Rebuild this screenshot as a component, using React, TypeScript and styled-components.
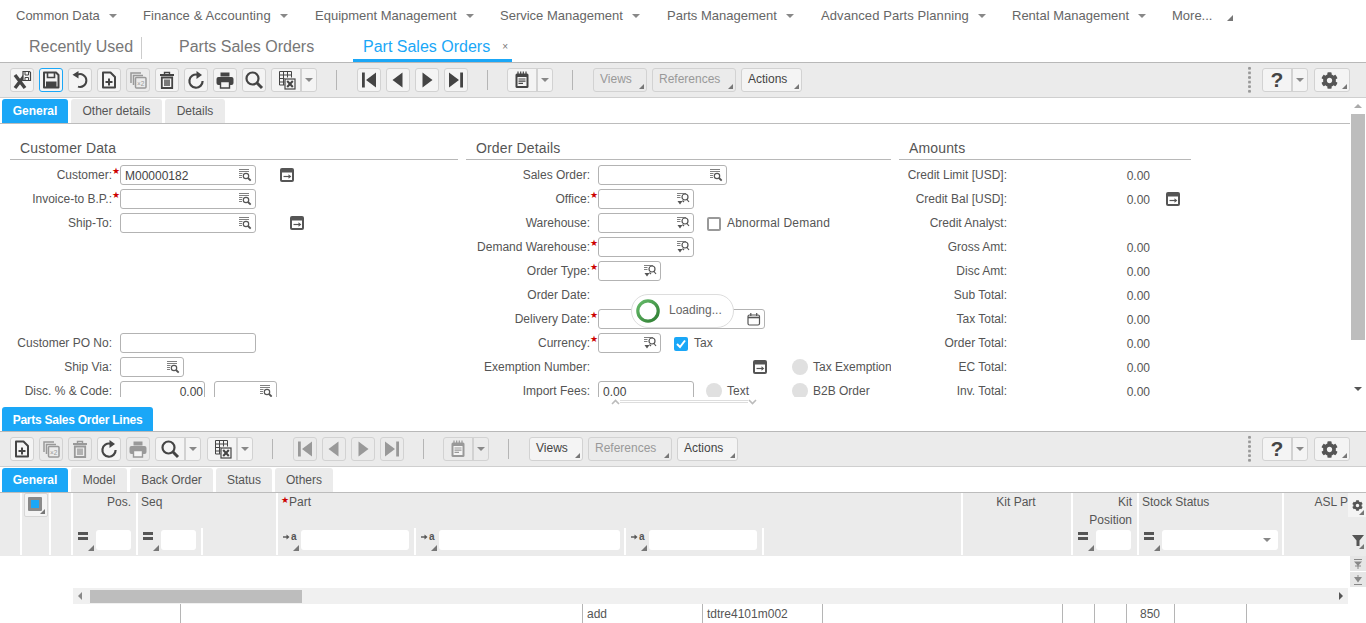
import React from 'react';
import styled, { createGlobalStyle } from 'styled-components';
import { FaCog } from 'react-icons/fa';

const blue = '#1aa7f7';

const GlobalStyle = createGlobalStyle`
  html, body { margin: 0; padding: 0; background: #fff; }
  body { font-family: "Liberation Sans", Arial, sans-serif; color: #555; font-size: 12px; }
  * { box-sizing: border-box; }
`;

const Page = styled.div`
  position: relative;
  width: 1366px;
  height: 623px;
  overflow: hidden;
`;

/* top menu */
const MenuBar = styled.div`
  display: flex;
  align-items: center;
  height: 31px;
  padding-left: 16px;
  font-size: 13px;
  color: #666;
`;
const MenuItem = styled.div<{ $w: number; $ls?: number }>`
  display: flex;
  align-items: center;
  width: ${({ $w }) => $w}px;
  white-space: nowrap;
  letter-spacing: ${({ $ls }) => $ls ?? 0}px;
`;
const Caret = styled.span`
  display: inline-block;
  margin-left: 9px;
  border-left: 4px solid transparent;
  border-right: 4px solid transparent;
  border-top: 4px solid #888;
`;
const MoreCorner = styled.span`
  display: inline-block;
  margin: 5px 0 0 15px;
  border-left: 6px solid transparent;
  border-bottom: 6px solid #777;
`;

const TabRow = styled.div`
  display: flex;
  height: 32px;
  padding-left: 19px;
  font-size: 16px;
  color: #777;
  border-bottom: 1px solid #b8b8b8;
`;
const PageTab = styled.div<{ $active?: boolean; $w: number; $pl?: number }>`
  display: flex;
  align-items: center;
  width: ${({ $w }) => $w}px;
  height: 31px;
  padding-left: ${({ $pl }) => $pl ?? 10}px;
  padding-top: ${({ $active }) => ($active ? 3 : 0)}px;
  white-space: nowrap;
  color: ${({ $active }) => ($active ? blue : '#777')};
  border-bottom: ${({ $active }) => ($active ? `3px solid ${blue}` : 'none')};
`;
const RecentLabel = styled(PageTab)`
  position: relative;
  &::after {
    content: '';
    position: absolute;
    right: 9px;
    top: 6px;
    height: 22px;
    width: 1px;
    background: #ccc;
  }
`;
const CloseMark = styled.span`
  margin: 0 0 0 12px;
  font-size: 10px;
  color: #777;
`;

/* toolbars */
const Toolbar = styled.div<{ $borderTop?: boolean }>`
  display: flex;
  align-items: center;
  gap: 5px;
  height: ${({ $borderTop }) => ($borderTop ? 36 : 35)}px;
  padding: 0 16px 0 10px;
  background: #ebebeb;
  border-bottom: 1px solid #cfcfcf;
  border-top: ${({ $borderTop }) => ($borderTop ? '1px solid #b8b8b8' : 'none')};
`;
const Btn = styled.div<{ $off?: boolean; $focus?: boolean }>`
  display: flex;
  align-items: center;
  justify-content: center;
  width: 24px;
  height: 24px;
  border-radius: 3px;
  background: ${({ $off }) => ($off ? '#ebebeb' : '#f4f4f4')};
  border: 1px solid ${({ $focus }) => ($focus ? blue : '#d2d2d2')};
  color: ${({ $off }) => ($off ? '#999' : '#444')};
`;
const Split = styled.div<{ $off?: boolean }>`
  display: flex;
  height: 24px;
  border-radius: 3px;
  border: 1px solid #d2d2d2;
  color: ${({ $off }) => ($off ? '#999' : '#444')};
  background: ${({ $off }) => ($off ? '#ebebeb' : '#f4f4f4')};
  & + & {
    margin-left: 1px;
  }
`;
const SplitMain = styled.div`
  display: flex;
  align-items: center;
  justify-content: center;
  width: 30px;
  border-right: 2px solid #d2d2d2;
`;
const SplitArrow = styled.div`
  display: flex;
  align-items: center;
  justify-content: center;
  width: 14px;
  &::after {
    content: '';
    border-left: 4px solid transparent;
    border-right: 4px solid transparent;
    border-top: 4px solid #888;
  }
`;
const Sep = styled.div<{ $tight?: boolean }>`
  width: 1px;
  height: 20px;
  margin: 0 ${({ $tight }) => ($tight ? 14 : 15)}px 0 14px;
  background: #b5b5b5;
`;
const MenuBtn = styled.div<{ $off?: boolean; $w: number }>`
  position: relative;
  display: flex;
  align-items: center;
  width: ${({ $w }) => $w}px;
  height: 24px;
  padding: 0 0 2px 6px;
  border-radius: 3px;
  background: ${({ $off }) => ($off ? '#ebebeb' : '#f4f4f4')};
  border: 1px solid #d2d2d2;
  color: ${({ $off }) => ($off ? '#999' : '#444')};
`;
const Corner = styled.span`
  position: absolute;
  right: 2px;
  bottom: 2px;
  border-left: 5px solid transparent;
  border-bottom: 5px solid #777;
`;
const Spacer = styled.div`
  flex: 1;
`;
const Dots = styled.div`
  width: 3px;
  height: 28px;
  margin-right: 6px;
  background-image: radial-gradient(circle, #999 1.3px, transparent 1.5px);
  background-size: 3px 4.6px;
`;
const HelpMark = styled.span`
  font-size: 21px;
  font-weight: bold;
  color: #444;
`;
const GearBtn = styled(MenuBtn)`
  justify-content: flex-start;
  margin-left: 1px;
  padding: 0 0 0 6px;
  color: #555;
`;

/* sub tabs */
const SubTabs = styled.div`
  display: flex;
  gap: 3px;
  height: 25px;
  margin-top: 1px;
  padding-left: 2px;
  border-bottom: 1px solid #bcbcbc;
`;
const SubTab = styled.div<{ $active?: boolean; $w: number }>`
  display: flex;
  align-items: center;
  justify-content: center;
  width: ${({ $w }) => $w}px;
  height: 24px;
  border-radius: 3px 3px 0 0;
  background: ${({ $active }) => ($active ? blue : '#ebebeb')};
  color: ${({ $active }) => ($active ? '#fff' : '#555')};
  font-weight: ${({ $active }) => ($active ? 'bold' : 'normal')};
`;

/* form */
const FormArea = styled.div`
  display: flex;
  height: 299px;
`;
const FormMain = styled.div`
  width: 1350px;
  overflow: hidden;
`;
const Columns = styled.div`
  display: flex;
  gap: 8px;
  padding-left: 10px;
`;
const Section = styled.section<{ $w: number }>`
  width: ${({ $w }) => $w}px;
  overflow: hidden;
  flex: none;
`;
const SectionTitle = styled.div`
  display: flex;
  align-items: flex-end;
  height: 36px;
  padding: 0 0 3px 10px;
  font-size: 14px;
  letter-spacing: 0.15px;
  color: #555;
  border-bottom: 1px solid #b8b8b8;
  margin-bottom: 3px;
`;
const Row = styled.div`
  display: flex;
  align-items: center;
  height: 24px;
  white-space: nowrap;
`;
const Label = styled.div<{ $w: number }>`
  width: ${({ $w }) => $w}px;
  padding-bottom: 1px;
  text-align: right;
  flex: none;
`;
const Star = styled.span`
  display: block;
  flex: none;
  width: 8px;
  height: 20px;
  font-size: 9px;
  line-height: 12px;
  color: #c00;
`;
const Field = styled.div<{ $w: number; $ml?: number; $right?: boolean }>`
  position: relative;
  display: flex;
  align-items: center;
  justify-content: ${({ $right }) => ($right ? 'flex-end' : 'flex-start')};
  flex: none;
  width: ${({ $w }) => $w}px;
  height: 20px;
  margin-left: ${({ $ml }) => $ml ?? 0}px;
  padding: 1px ${({ $right }) => ($right ? 1 : 0)}px 0 4px;
  border: 1px solid #b3b3b3;
  border-radius: 3px;
  background: #fff;
  color: #444;
`;
const FieldIcon = styled.span`
  position: absolute;
  right: 3px;
  top: 2px;
  display: flex;
  color: #555;
`;
const LinkBtn = styled.span<{ $ml: number }>`
  display: flex;
  flex: none;
  margin-left: ${({ $ml }) => $ml}px;
`;
const CheckBox = styled.span<{ $on?: boolean; $ml: number }>`
  display: flex;
  flex: none;
  align-items: center;
  justify-content: center;
  width: 14px;
  height: 14px;
  margin: 1px 6px 0 ${({ $ml }) => $ml}px;
  border-radius: 2px;
  border: ${({ $on }) => ($on ? 'none' : '2px solid #999')};
  background: ${({ $on }) => ($on ? blue : '#fff')};
`;
const CheckText = styled.span<{ $ls?: number }>`
  letter-spacing: ${({ $ls }) => $ls ?? 0}px;
`;
const Toggle = styled.span<{ $ml: number }>`
  flex: none;
  width: 16px;
  height: 16px;
  margin: 0 5px 0 ${({ $ml }) => $ml}px;
  border-radius: 50%;
  background: #e0e0e0;
`;
const AmountValue = styled.div`
  flex: none;
  width: 143px;
  padding-top: 1px;
  text-align: right;
  color: #555;
`;
const AmountLabel = styled(Label)`
  color: #555;
`;

const VScroll = styled.div`
  position: relative;
  display: flex;
  flex-direction: column;
  align-items: center;
  justify-content: space-between;
  width: 16px;
  padding: 6px 0 6px;
  background: #fff;
`;
const ScrollUp = styled.span`
  border-left: 4px solid transparent;
  border-right: 4px solid transparent;
  border-bottom: 4px solid #aaa;
`;
const ScrollDown = styled.span`
  border-left: 4px solid transparent;
  border-right: 4px solid transparent;
  border-top: 4px solid #555;
`;
const ScrollThumb = styled.div`
  position: absolute;
  left: 1px;
  top: 16px;
  width: 14px;
  height: 226px;
  background: #bdbdbd;
`;

const Splitter = styled.div`
  display: flex;
  align-items: flex-start;
  height: 10px;
  padding: 2px 0 0 611px;
  color: #bbb;
`;
const SplitterLine = styled.div`
  width: 128px;
  height: 3px;
  margin-top: 1px;
  border-top: 1px solid #ddd;
  border-bottom: 1px solid #ddd;
`;

/* lines tab */
const LinesTab = styled.div`
  display: flex;
  align-items: center;
  justify-content: center;
  width: 151px;
  height: 24px;
  margin-left: 2px;
  padding-top: 1px;
  border-radius: 3px 3px 0 0;
  background: ${blue};
  color: #fff;
  font-weight: bold;
  letter-spacing: -0.25px;
`;

/* grid */
const GridHead = styled.div`
  display: flex;
  height: 63px;
  background: #ebebeb;
`;
const HeadCell = styled.div<{ $w: number; $align?: string; $last?: boolean }>`
  display: flex;
  flex-direction: column;
  flex: none;
  width: ${({ $w }) => $w}px;
  height: 62px;
  border-right: ${({ $last }) => ($last ? 'none' : '2px solid #fff')};
  text-align: ${({ $align }) => $align ?? 'left'};
  overflow: hidden;
`;
const HeadTitle = styled.div<{ $flush?: boolean }>`
  height: 35px;
  padding: 0 ${({ $flush }) => ($flush ? 0 : 5)}px 0 ${({ $flush }) => ($flush ? 0 : 3)}px;
  line-height: 18px;
  color: #555;
  white-space: nowrap;
`;
const HeadStar = styled.span`
  font-size: 9px;
  line-height: 0;
  color: #c00;
  vertical-align: 3px;
`;
const HeadFilters = styled.div`
  display: flex;
  height: 27px;
  margin-top: auto;
`;
const SubCell = styled.div<{ $w: number; $noLine?: boolean }>`
  position: relative;
  display: flex;
  align-items: center;
  flex: none;
  width: ${({ $w }) => $w}px;
  padding: 0 0 4px 4px;
  border-right: ${({ $noLine }) => ($noLine ? 'none' : '2px solid #fff')};
`;
const FilterOp = styled.span`
  position: relative;
  display: flex;
  flex: none;
  align-items: flex-start;
  width: 19px;
  height: 23px;
  padding-top: 4px;
  color: #555;
`;
const OpCorner = styled.span`
  position: absolute;
  right: 2px;
  bottom: 0;
  border-left: 6px solid transparent;
  border-bottom: 6px solid #777;
`;
const OpText = styled.span`
  display: flex;
  align-items: center;
  font-size: 10px;
  line-height: 10px;
  font-weight: bold;
  color: #555;
`;
const CellInput = styled.div<{ $w: number }>`
  position: relative;
  flex: none;
  width: ${({ $w }) => $w}px;
  height: 20px;
  border-radius: 3px;
  background: #fff;
`;
const SelectArrow = styled.span`
  position: absolute;
  right: 7px;
  top: 8px;
  border-left: 4px solid transparent;
  border-right: 4px solid transparent;
  border-top: 4px solid #888;
`;
const SelectAll = styled.div`
  position: relative;
  display: flex;
  align-items: center;
  justify-content: center;
  width: 24px;
  height: 24px;
  margin-left: 2px;
  background: #f4f4f4;
  border: 1px solid #d6d6d6;
  border-radius: 2px;
`;
const SelectMark = styled.span`
  display: block;
  width: 14px;
  height: 14px;
  margin: 0 3px 2px 0;
  background: ${blue};
  border: 3px solid #8a8a8a;
  border-radius: 1px;
`;
const HeadRail = styled.div`
  display: flex;
  flex-direction: column;
  align-items: flex-end;
  justify-content: space-between;
  flex: none;
  width: 18px;
  height: 62px;
  padding-bottom: 4px;
`;
const RailButton = styled.div`
  position: relative;
  display: flex;
  align-items: center;
  justify-content: center;
  width: 18px;
  height: 24px;
  background: #f4f4f4;
  color: #555;
`;
const RailFilter = styled.div`
  position: relative;
  display: flex;
  justify-content: center;
  width: 17px;
  height: 18px;
  color: #555;
`;

const GridBody = styled.div`
  display: flex;
  justify-content: flex-end;
  height: 32px;
`;
const BodyButtons = styled.div`
  display: flex;
  flex-direction: column;
  width: 16px;
`;
const BodyBtn = styled.div`
  display: flex;
  align-items: center;
  justify-content: center;
  height: 16px;
  background: #e6e6e6;
  border-bottom: 1px solid #fff;
  color: #888;
`;
const HScrollRow = styled.div`
  display: flex;
  height: 16px;
  padding: 0 18px 0 73px;
`;
const HScroll = styled.div`
  position: relative;
  display: flex;
  flex: 1;
  align-items: center;
  justify-content: space-between;
  padding: 0 5px;
  background: #f0f0f0;
`;
const HThumb = styled.div`
  position: absolute;
  left: 17px;
  top: 2px;
  width: 212px;
  height: 13px;
  background: #bdbdbd;
`;
const ArrowLeft = styled.span`
  border-top: 4px solid transparent;
  border-bottom: 4px solid transparent;
  border-right: 4px solid #888;
`;
const ArrowRight = styled.span`
  border-top: 4px solid transparent;
  border-bottom: 4px solid transparent;
  border-left: 4px solid #555;
`;
const FootRow = styled.div`
  display: flex;
  height: 19px;
  padding-left: 180px;
`;
const FootCell = styled.div<{ $w: number; $pl: number }>`
  flex: none;
  width: ${({ $w }) => $w}px;
  height: 19px;
  padding: 2px 0 0 ${({ $pl }) => $pl}px;
  line-height: 16px;
  border-left: 1px solid #b5b5b5;
  color: #555;
`;

/* loading overlay */
const LoadingPill = styled.div`
  position: absolute;
  left: 631px;
  top: 294px;
  display: flex;
  align-items: center;
  width: 103px;
  height: 34px;
  padding: 0 0 1px 4px;
  gap: 9px;
  background: #fff;
  border: 1px solid #ddd;
  border-radius: 17px;
  color: #666;
`;
const LoadingText = styled.span`
  padding-bottom: 2px;
`;

/* icons */
type IconProps = { w?: number; h?: number; children: React.ReactNode };
const Svg = ({ w = 20, h = 20, children }: IconProps) => (
  <svg width={w} height={h} viewBox={`0 0 ${w} ${h}`} fill="none">{children}</svg>
);

const icons: Record<string, React.ReactNode> = {
  xsave: (
    <Svg>
      <path d="M3 5l10 13M13 5L3 18" stroke="currentColor" strokeWidth="3.4" />
      <path d="M11 1.5h6.5l1 1v8H11z" fill="#f4f4f4" stroke="currentColor" strokeWidth="1.2" />
      <path d="M13 2v3h3.5V2M13 10.5V7.5h3.5v3" stroke="currentColor" />
    </Svg>
  ),
  save: (
    <Svg>
      <path d="M3 2.5h12l2.5 2.5v12.5H3z" stroke="currentColor" strokeWidth="2" strokeLinejoin="round" />
      <path d="M6.5 3v4.5h7V3" stroke="currentColor" strokeWidth="1.6" />
      <path d="M5 11.5h10.5V17H5z" fill="currentColor" />
    </Svg>
  ),
  undo: (
    <Svg>
      <path d="M7.5 4.6A6.4 6.4 0 1 1 8 16.6" stroke="currentColor" strokeWidth="2" />
      <path d="M8.5 1v7.5L2.5 4.8z" fill="currentColor" />
    </Svg>
  ),
  add: (
    <Svg>
      <path d="M4 2.5h7.5l4.5 4.5v10.5H4z" stroke="currentColor" strokeWidth="2" strokeLinejoin="round" />
      <path d="M6.5 12h7M10 8.5v7" stroke="currentColor" strokeWidth="2" />
    </Svg>
  ),
  copy: (
    <Svg>
      <path d="M3 13V3h10" stroke="currentColor" strokeWidth="1.5" />
      <path d="M5.5 15V5.5H15" stroke="currentColor" strokeWidth="1.5" />
      <rect x="7.5" y="7.5" width="10.5" height="10.5" rx="1" stroke="currentColor" strokeWidth="1.5" />
      <text x="9" y="16" fontSize="6.5" fontFamily="Liberation Sans" fill="currentColor">×2</text>
    </Svg>
  ),
  trash: (
    <Svg>
      <path d="M3 5h14" stroke="currentColor" strokeWidth="2" />
      <path d="M7.5 4.5V2.5h5v2" stroke="currentColor" strokeWidth="1.4" />
      <path d="M4.8 7.5h10.4V18H4.8z" stroke="currentColor" strokeWidth="1.8" />
      <path d="M8 9.5v6.5M10 9.5v6.5M12 9.5v6.5" stroke="currentColor" strokeWidth="1.4" />
    </Svg>
  ),
  refresh: (
    <Svg>
      <path d="M11.5 4.7A6.6 6.6 0 1 0 16.6 11" stroke="currentColor" strokeWidth="2.2" />
      <path d="M10.5 1l5.5 4-5.5 4z" fill="currentColor" />
    </Svg>
  ),
  print: (
    <Svg>
      <path d="M5.5 2.5h9v4h-9z" fill="currentColor" />
      <rect x="1.5" y="7" width="17" height="8" rx="2" fill="currentColor" />
      <path d="M5.5 11.5h9v6.5h-9z" fill="#f4f4f4" stroke="currentColor" strokeWidth="1.4" />
    </Svg>
  ),
  search: (
    <Svg>
      <circle cx="8.5" cy="8.5" r="6" stroke="currentColor" strokeWidth="2.2" />
      <path d="M12.8 12.8l5.2 5.2" stroke="currentColor" strokeWidth="3" />
    </Svg>
  ),
  excel: (
    <Svg>
      <path d="M3.5 1.5h12v6M3.5 1.5V15h5M3.5 5h12M3.5 8.5h5M3.5 12h5M7.5 1.5v13.5M11.5 1.5v6" stroke="currentColor" strokeWidth="1" />
      <rect x="9" y="9" width="10" height="10" fill="#f4f4f4" stroke="currentColor" strokeWidth="1.2" />
      <path d="M11.2 11l5.6 6M16.8 11l-5.6 6" stroke="currentColor" strokeWidth="2" />
    </Svg>
  ),
  first: (
    <Svg>
      <path d="M3 2.5h2.8v15H3zM17 2.5v15L7 10z" fill="currentColor" />
    </Svg>
  ),
  prev: (
    <Svg>
      <path d="M14.5 2.5v15L4.5 10z" fill="currentColor" />
    </Svg>
  ),
  next: (
    <Svg>
      <path d="M5.5 2.5v15l10-7.5z" fill="currentColor" />
    </Svg>
  ),
  last: (
    <Svg>
      <path d="M17 2.5h-2.8v15H17zM3 2.5v15L13 10z" fill="currentColor" />
    </Svg>
  ),
  notes: (
    <Svg>
      <rect x="3.5" y="3.5" width="13" height="14.5" rx="1.5" fill="currentColor" />
      <path d="M6 1.5v3M8.7 1.5v3M11.3 1.5v3M14 1.5v3" stroke="currentColor" strokeWidth="1.2" />
      <path d="M5.5 7h9v9h-9z" fill="#f4f4f4" />
      <path d="M6.5 9h7M6.5 11.2h7M6.5 13.4h4.5" stroke="currentColor" strokeWidth="1.2" />
    </Svg>
  ),
};

const Lookup = () => (
  <Svg w={14} h={14}>
    <path d="M1 1.5h10M1 3.5h10M1 5.5h3.5M1 7.5h3M1 9.5h3" stroke="currentColor" strokeWidth="1" opacity=".75" />
    <circle cx="8" cy="8" r="2.7" stroke="currentColor" strokeWidth="1.2" />
    <path d="M10 10l2.7 2.7" stroke="currentColor" strokeWidth="1.8" />
  </Svg>
);
const LookupDown = () => (
  <Svg w={14} h={14}>
    <path d="M1 1.5h9M1 3.5h3.5M1 5.5h3.5" stroke="currentColor" strokeWidth="1" opacity=".75" />
    <circle cx="9" cy="5" r="3" stroke="currentColor" strokeWidth="1.2" />
    <path d="M11 7.5l2 2.5M6.5 8.5l1.5 1.5" stroke="currentColor" strokeWidth="1.2" />
    <path d="M1.5 9h5L4 12.5z" fill="currentColor" />
  </Svg>
);
const Calendar = () => (
  <Svg w={14} h={14}>
    <rect x="1" y="3" width="11.5" height="10" rx="1.5" stroke="currentColor" strokeWidth="1.2" />
    <path d="M1 5.5h11.5" stroke="currentColor" strokeWidth="1.6" />
    <path d="M3.8 1v3M9.7 1v3" stroke="currentColor" strokeWidth="1.2" />
  </Svg>
);
const LinkIcon = () => (
  <Svg w={14} h={14}>
    <rect width="14" height="14" rx="2" fill="#555" />
    <path d="M2 4.5h10V12H2z" fill="#fff" />
    <path d="M3.5 8.5h6" stroke="#555" strokeWidth="1.2" />
    <path d="M8.5 6.3l2.8 2.2-2.8 2.2z" fill="#555" />
  </Svg>
);
const Check = () => (
  <Svg w={12} h={12}>
    <path d="M2 6l3 3 5-6.5" stroke="#fff" strokeWidth="2" />
  </Svg>
);
const EqOp = () => (
  <Svg w={14} h={12}>
    <path d="M1 0h10v3H1zM1 5h10v3H1z" fill="currentColor" />
  </Svg>
);
const ArrowA = () => (
  <OpText>
    <Svg w={9} h={10}>
      <path d="M1 5h4" stroke="#555" strokeWidth="1.4" />
      <path d="M4.5 2.5l3 2.5-3 2.5z" fill="#555" />
    </Svg>
    a
  </OpText>
);
const Spinner = () => (
  <Svg w={24} h={24}>
    <defs>
      <linearGradient id="spin" x1="0" y1="0" x2="1" y2="1">
        <stop offset="0" stopColor="#66bb6a" />
        <stop offset="1" stopColor="#2e7d32" />
      </linearGradient>
    </defs>
    <circle cx="12" cy="12" r="10.2" stroke="url(#spin)" strokeWidth="3.2" />
  </Svg>
);
const ChevronUp = () => (
  <Svg w={9} h={6}>
    <path d="M1 5l3.5-3.5L8 5" stroke="currentColor" strokeWidth="1.6" />
  </Svg>
);
const ChevronDown = () => (
  <Svg w={9} h={6}>
    <path d="M1 1l3.5 3.5L8 1" stroke="currentColor" strokeWidth="1.6" />
  </Svg>
);

const menu: [string, number, number?][] = [
  ['Common Data', 127],
  ['Finance & Accounting', 172, 0.1],
  ['Equipment Management', 185],
  ['Service Management', 167],
  ['Parts Management', 154],
  ['Advanced Parts Planning', 191, 0.08],
  ['Rental Management', 160],
];

const IconBtn = ({ name, off, focus }: { name: string; off?: boolean; focus?: boolean }) => (
  <Btn $off={off} $focus={focus}>{icons[name]}</Btn>
);
const SplitBtn = ({ name, off }: { name: string; off?: boolean }) => (
  <Split $off={off}>
    <SplitMain>{icons[name]}</SplitMain>
    <SplitArrow />
  </Split>
);
const ViewBtn = ({ text, w, off }: { text: string; w: number; off?: boolean }) => (
  <MenuBtn $w={w} $off={off}>
    {text}
    <Corner />
  </MenuBtn>
);
const ToolRight = () => (
  <>
    <Spacer />
    <Dots />
    <Split>
      <SplitMain><HelpMark>?</HelpMark></SplitMain>
      <SplitArrow />
    </Split>
    <GearBtn $w={36}>
      <FaCog size={17} />
      <Corner />
    </GearBtn>
  </>
);

const FieldBox = ({ w, value, icon = 'lookup' }: { w: number; value?: string; icon?: 'lookup' | 'down' | 'cal' | 'none' }) => (
  <Field $w={w}>
    {value}
    {icon !== 'none' && (
      <FieldIcon>
        {icon === 'lookup' && <Lookup />}
        {icon === 'down' && <LookupDown />}
        {icon === 'cal' && <Calendar />}
      </FieldIcon>
    )}
  </Field>
);

const Lab = ({ w, text, req }: { w: number; text: string; req?: boolean }) => (
  <>
    <Label $w={w}>{text}</Label>
    <Star>{req ? '★' : ''}</Star>
  </>
);

const amounts: [string, string][] = [
  ['Credit Limit [USD]:', '0.00'],
  ['Credit Bal [USD]:', '0.00'],
  ['Credit Analyst:', ''],
  ['Gross Amt:', '0.00'],
  ['Disc Amt:', '0.00'],
  ['Sub Total:', '0.00'],
  ['Tax Total:', '0.00'],
  ['Order Total:', '0.00'],
  ['EC Total:', '0.00'],
  ['Inv. Total:', '0.00'],
];

const Op = ({ text }: { text?: boolean }) => (
  <FilterOp>
    {text ? <ArrowA /> : <EqOp />}
    <OpCorner />
  </FilterOp>
);

const footCells: [number, string, number][] = [
  [402, '', 4],
  [120, 'add', 4],
  [120, 'tdtre4101m002', 4],
  [240, '', 4],
  [32, '', 4],
  [32, '', 4],
  [48, '850', 13],
  [72, '', 4],
  [1, '', 0],
];

const App = () => (
  <Page>
    <GlobalStyle />
    <MenuBar>
      {menu.map(([text, w, ls]) => (
        <MenuItem key={text} $w={w} $ls={ls}>
          {text}
          <Caret />
        </MenuItem>
      ))}
      <MenuItem $w={80}>
        More...
        <MoreCorner />
      </MenuItem>
    </MenuBar>

    <TabRow>
      <RecentLabel $w={132}>Recently Used</RecentLabel>
      <PageTab $w={202} $pl={28}>Parts Sales Orders</PageTab>
      <PageTab $active $w={159}>
        Part Sales Orders
        <CloseMark>×</CloseMark>
      </PageTab>
    </TabRow>

    <Toolbar>
      <IconBtn name="xsave" />
      <IconBtn name="save" focus />
      <IconBtn name="undo" />
      <IconBtn name="add" />
      <IconBtn name="copy" off />
      <IconBtn name="trash" />
      <IconBtn name="refresh" />
      <IconBtn name="print" />
      <IconBtn name="search" />
      <SplitBtn name="excel" />
      <Sep />
      <IconBtn name="first" />
      <IconBtn name="prev" />
      <IconBtn name="next" />
      <IconBtn name="last" />
      <Sep $tight />
      <SplitBtn name="notes" />
      <Sep />
      <ViewBtn text="Views" w={54} off />
      <ViewBtn text="References" w={84} off />
      <ViewBtn text="Actions" w={61} />
      <ToolRight />
    </Toolbar>

    <FormArea>
      <FormMain>
        <SubTabs>
          <SubTab $active $w={66}>General</SubTab>
          <SubTab $w={91}>Other details</SubTab>
          <SubTab $w={60}>Details</SubTab>
        </SubTabs>
        <Columns>
          <Section $w={448}>
            <SectionTitle>Customer Data</SectionTitle>
            <Row>
              <Lab w={102} text="Customer:" req />
              <FieldBox w={136} value="M00000182" />
              <LinkBtn $ml={24}><LinkIcon /></LinkBtn>
            </Row>
            <Row>
              <Lab w={102} text="Invoice-to B.P.:" req />
              <FieldBox w={136} />
            </Row>
            <Row>
              <Lab w={102} text="Ship-To:" />
              <FieldBox w={136} />
              <LinkBtn $ml={34}><LinkIcon /></LinkBtn>
            </Row>
            <Row />
            <Row />
            <Row />
            <Row />
            <Row>
              <Lab w={102} text="Customer PO No:" />
              <FieldBox w={136} icon="none" />
            </Row>
            <Row>
              <Lab w={102} text="Ship Via:" />
              <FieldBox w={64} />
            </Row>
            <Row>
              <Lab w={102} text="Disc. % & Code:" />
              <Field $w={85} $right>0.00</Field>
              <Field $w={63} $ml={9}><FieldIcon><Lookup /></FieldIcon></Field>
            </Row>
          </Section>

          <Section $w={425}>
            <SectionTitle>Order Details</SectionTitle>
            <Row>
              <Lab w={124} text="Sales Order:" />
              <FieldBox w={129} />
            </Row>
            <Row>
              <Lab w={124} text="Office:" req />
              <FieldBox w={96} icon="down" />
            </Row>
            <Row>
              <Lab w={124} text="Warehouse:" />
              <FieldBox w={96} icon="down" />
              <CheckBox $ml={13} />
              <CheckText $ls={0.2}>Abnormal Demand</CheckText>
            </Row>
            <Row>
              <Lab w={124} text="Demand Warehouse:" req />
              <FieldBox w={96} icon="down" />
            </Row>
            <Row>
              <Lab w={124} text="Order Type:" req />
              <FieldBox w={63} icon="down" />
            </Row>
            <Row>
              <Lab w={124} text="Order Date:" />
            </Row>
            <Row>
              <Lab w={124} text="Delivery Date:" req />
              <FieldBox w={167} icon="cal" />
            </Row>
            <Row>
              <Lab w={124} text="Currency:" req />
              <FieldBox w={63} icon="down" />
              <CheckBox $on $ml={13}><Check /></CheckBox>
              Tax
            </Row>
            <Row>
              <Lab w={124} text="Exemption Number:" />
              <LinkBtn $ml={155}><LinkIcon /></LinkBtn>
              <Toggle $ml={25} />
              Tax Exemption
            </Row>
            <Row>
              <Lab w={124} text="Import Fees:" />
              <FieldBox w={96} value="0.00" icon="none" />
              <Toggle $ml={12} />
              Text
              <Toggle $ml={43} />
              B2B Order
            </Row>
          </Section>

          <Section $w={292}>
            <SectionTitle>Amounts</SectionTitle>
            {amounts.map(([label, value], i) => (
              <Row key={label}>
                <AmountLabel $w={108}>{label}</AmountLabel>
                <AmountValue>{value}</AmountValue>
                {i === 1 && <LinkBtn $ml={16}><LinkIcon /></LinkBtn>}
              </Row>
            ))}
          </Section>
        </Columns>
      </FormMain>
      <VScroll>
        <ScrollUp />
        <ScrollThumb />
        <ScrollDown />
      </VScroll>
    </FormArea>

    <Splitter>
      <ChevronUp />
      <SplitterLine />
      <ChevronDown />
    </Splitter>

    <LinesTab>Parts Sales Order Lines</LinesTab>
    <Toolbar $borderTop>
      <IconBtn name="add" />
      <IconBtn name="copy" off />
      <IconBtn name="trash" off />
      <IconBtn name="refresh" />
      <IconBtn name="print" off />
      <SplitBtn name="search" />
      <SplitBtn name="excel" />
      <Sep />
      <IconBtn name="first" off />
      <IconBtn name="prev" off />
      <IconBtn name="next" off />
      <IconBtn name="last" off />
      <Sep $tight />
      <SplitBtn name="notes" off />
      <Sep />
      <ViewBtn text="Views" w={54} />
      <ViewBtn text="References" w={84} off />
      <ViewBtn text="Actions" w={61} />
      <ToolRight />
    </Toolbar>

    <SubTabs>
      <SubTab $active $w={66}>General</SubTab>
      <SubTab $w={56}>Model</SubTab>
      <SubTab $w={83}>Back Order</SubTab>
      <SubTab $w={56}>Status</SubTab>
      <SubTab $w={58}>Others</SubTab>
    </SubTabs>

    <GridHead>
      <HeadCell $w={22} />
      <HeadCell $w={29}>
        <SelectAll>
          <SelectMark />
          <Corner />
        </SelectAll>
      </HeadCell>
      <HeadCell $w={22} />
      <HeadCell $w={65} $align="right">
        <HeadTitle>Pos.</HeadTitle>
        <HeadFilters>
          <SubCell $w={63} $noLine><Op /><CellInput $w={35} /></SubCell>
        </HeadFilters>
      </HeadCell>
      <HeadCell $w={140}>
        <HeadTitle>Seq</HeadTitle>
        <HeadFilters>
          <SubCell $w={65}><Op /><CellInput $w={35} /></SubCell>
        </HeadFilters>
      </HeadCell>
      <HeadCell $w={685}>
        <HeadTitle><HeadStar>★</HeadStar>Part</HeadTitle>
        <HeadFilters>
          <SubCell $w={138}><Op text /><CellInput $w={108} /></SubCell>
          <SubCell $w={210}><Op text /><CellInput $w={181} /></SubCell>
          <SubCell $w={138}><Op text /><CellInput $w={108} /></SubCell>
        </HeadFilters>
      </HeadCell>
      <HeadCell $w={110} $align="center">
        <HeadTitle>Kit Part</HeadTitle>
      </HeadCell>
      <HeadCell $w={66} $align="right">
        <HeadTitle>Kit<br />Position</HeadTitle>
        <HeadFilters>
          <SubCell $w={64} $noLine><Op /><CellInput $w={35} /></SubCell>
        </HeadFilters>
      </HeadCell>
      <HeadCell $w={145}>
        <HeadTitle>Stock Status</HeadTitle>
        <HeadFilters>
          <SubCell $w={143} $noLine>
            <Op />
            <CellInput $w={116}><SelectArrow /></CellInput>
          </SubCell>
        </HeadFilters>
      </HeadCell>
      <HeadCell $w={64} $align="right" $last>
        <HeadTitle $flush>ASL P</HeadTitle>
      </HeadCell>
      <HeadRail>
        <RailButton><FaCog size={11} /><Corner /></RailButton>
        <RailFilter>
          <Svg w={14} h={14}><path d="M1 2h12L8.5 7.5V13h-3V7.5z" fill="currentColor" /></Svg>
          <Corner />
        </RailFilter>
      </HeadRail>
    </GridHead>

    <GridBody>
      <BodyButtons>
        <BodyBtn>
          <Svg w={10} h={12}>
            <path d="M1 1.5h8M5 7v4" stroke="currentColor" />
            <path d="M1 3.5h8L5 8z" fill="currentColor" />
            <path d="M2 8h6" stroke="currentColor" />
          </Svg>
        </BodyBtn>
        <BodyBtn>
          <Svg w={10} h={12}>
            <path d="M5 1v3M1 10.5h8" stroke="currentColor" />
            <path d="M1 3h8L5 8.5z" fill="currentColor" />
          </Svg>
        </BodyBtn>
      </BodyButtons>
    </GridBody>

    <HScrollRow>
      <HScroll>
        <ArrowLeft />
        <HThumb />
        <ArrowRight />
      </HScroll>
    </HScrollRow>

    <FootRow>
      {footCells.map(([w, text, pl], i) => (
        <FootCell key={i} $w={w} $pl={pl}>{text}</FootCell>
      ))}
    </FootRow>

    <LoadingPill>
      <Spinner />
      <LoadingText>Loading...</LoadingText>
    </LoadingPill>
  </Page>
);

export default App;
